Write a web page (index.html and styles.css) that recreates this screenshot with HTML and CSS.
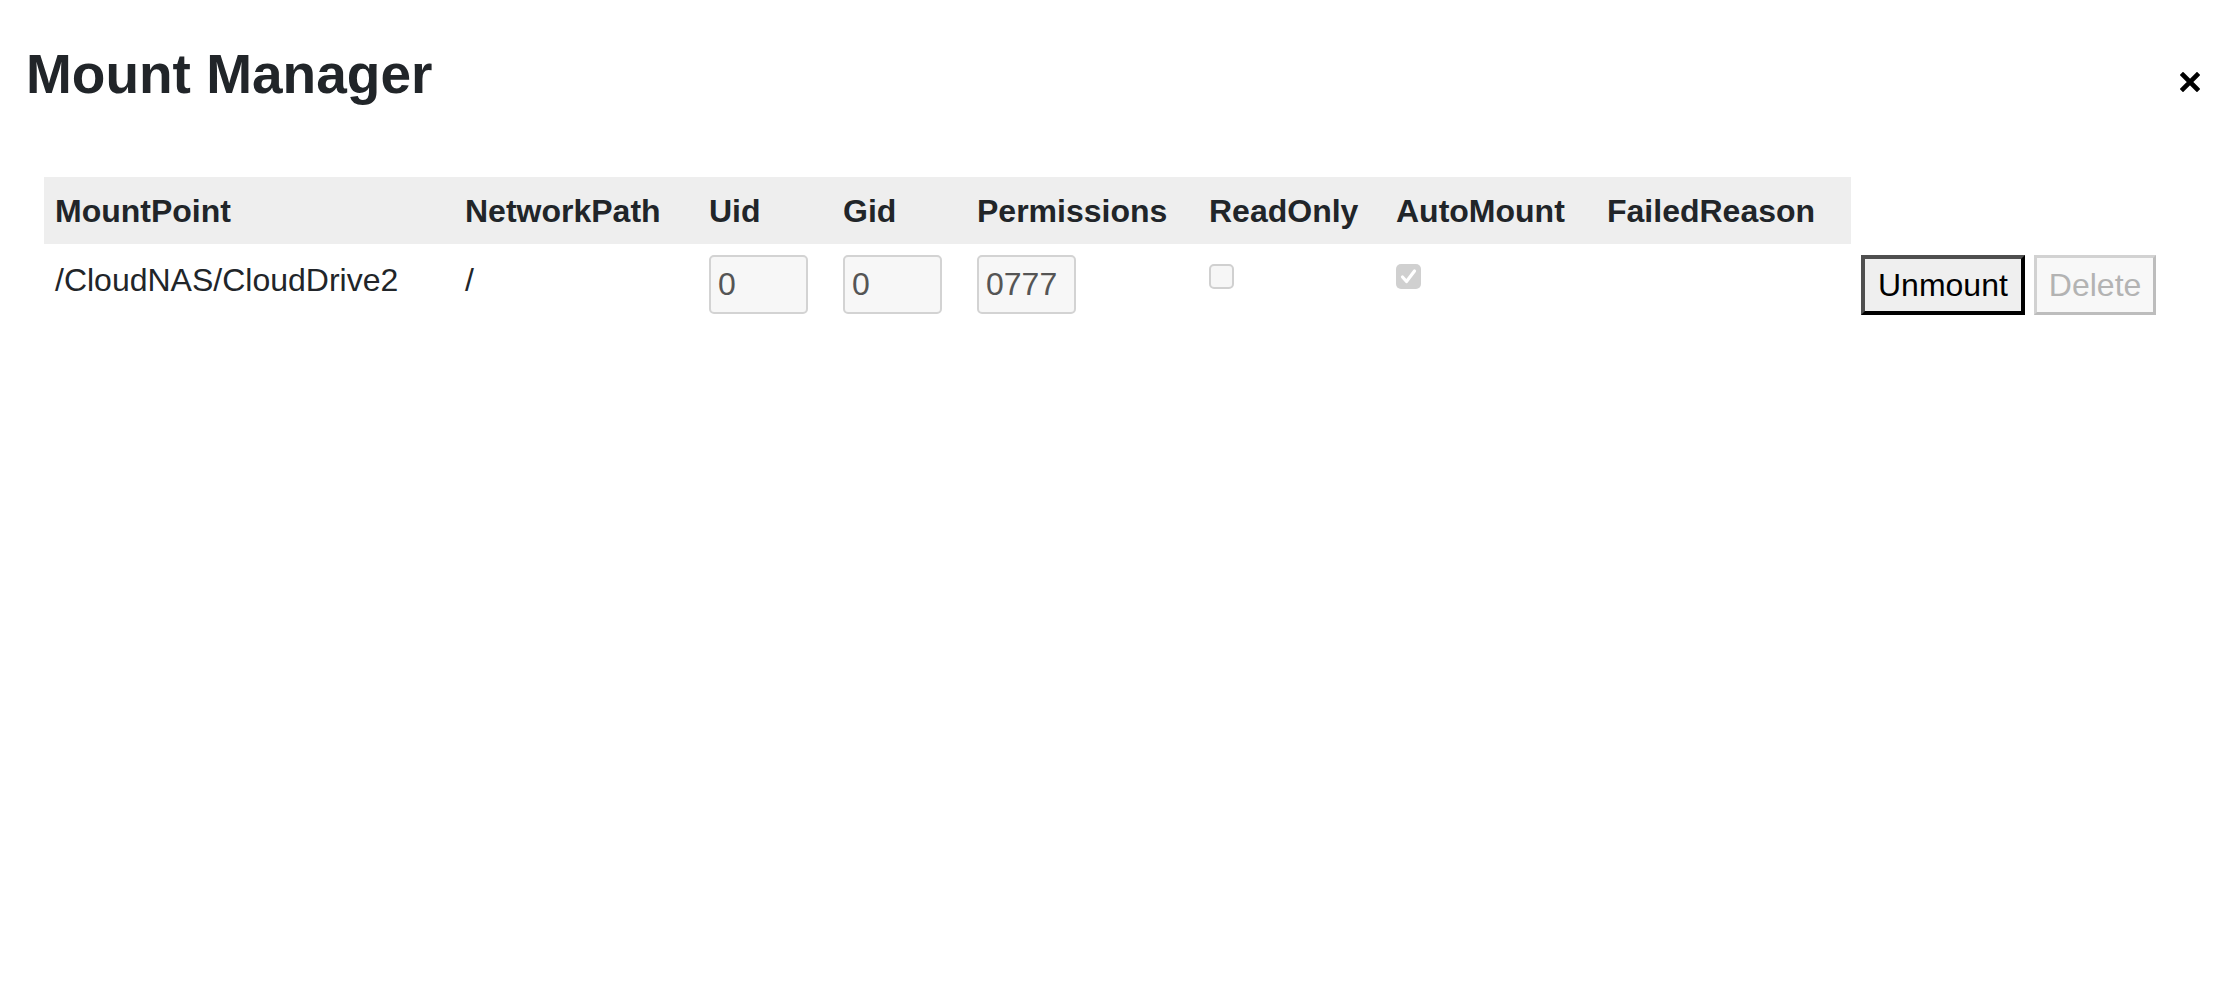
FILE: index.html
```html
<!DOCTYPE html>
<html lang="en">
<head>
<meta charset="utf-8">
<title>Mount Manager</title>
<link rel="stylesheet" href="styles.css">
</head>
<body>
<div class="modal">
  <div class="modal-header">
    <h1 class="modal-title">Mount Manager</h1>
    <button class="close" type="button" aria-label="Close">
      <svg width="20" height="20" viewBox="0 0 20 20"><path d="M3 3 L17 17 M17 3 L3 17" stroke="#000" stroke-width="4.6" stroke-linecap="square" fill="none"/></svg>
    </button>
  </div>
  <div class="modal-body">
    <table class="mounts">
      <colgroup>
        <col class="c-mp"><col class="c-np"><col class="c-uid"><col class="c-gid"><col class="c-perm"><col class="c-ro"><col class="c-auto"><col class="c-fail"><col class="c-act">
      </colgroup>
      <thead>
        <tr>
          <th>MountPoint</th>
          <th>NetworkPath</th>
          <th>Uid</th>
          <th>Gid</th>
          <th>Permissions</th>
          <th>ReadOnly</th>
          <th>AutoMount</th>
          <th>FailedReason</th>
          <th class="th-empty"></th>
        </tr>
      </thead>
      <tbody>
        <tr>
          <td class="txt">/CloudNAS/CloudDrive2</td>
          <td class="txt">/</td>
          <td><input class="field" type="text" value="0" readonly></td>
          <td><input class="field" type="text" value="0" readonly></td>
          <td><input class="field" type="text" value="0777" readonly></td>
          <td><span class="check"></span></td>
          <td><span class="check checked"><svg width="25" height="25" viewBox="0 0 25 25"><path d="M6.5 13 L10.5 17.5 L18.5 7" stroke="#fff" stroke-width="3.2" fill="none" stroke-linecap="round" stroke-linejoin="round"/></svg></span></td>
          <td class="txt"></td>
          <td class="actions"><button class="btn btn-unmount" type="button">Unmount</button><button class="btn btn-delete" type="button" disabled>Delete</button></td>
        </tr>
      </tbody>
    </table>
  </div>
</div>
</body>
</html>
```

FILE: styles.css
```css
* { box-sizing: border-box; }

body {
  margin: 0;
  background: #fff;
  font-family: "Liberation Sans", Arial, Helvetica, sans-serif;
  color: #212529;
}

.modal-header {
  display: flex;
  justify-content: space-between;
  align-items: flex-start;
  padding: 43px 36px 0 26px;
}

.modal-title {
  margin: 0;
  font-size: 55px;
  line-height: 62px;
  font-weight: bold;
  color: #212529;
}

.close {
  margin-top: 29px;
  padding: 0;
  border: 0;
  background: none;
  width: 20px;
  height: 20px;
  display: flex;
}

.modal-body {
  padding: 72px 0 0 44px;
}

.mounts {
  border-collapse: collapse;
  border-spacing: 0;
  table-layout: fixed;
  width: 2137px;
}

.c-mp { width: 410px; }
.c-np { width: 244px; }
.c-uid { width: 134px; }
.c-gid { width: 134px; }
.c-perm { width: 232px; }
.c-ro { width: 187px; }
.c-auto { width: 211px; }
.c-fail { width: 255px; }
.c-act { width: 330px; }

.mounts th {
  background: #eeeeee;
  text-align: left;
  font-size: 32px;
  font-weight: bold;
  line-height: 36px;
  padding: 16px 0 15px 11px;
  white-space: nowrap;
  color: #212529;
}

.mounts th.th-empty { background: transparent; }

.mounts td {
  vertical-align: top;
  padding: 11px 0 0 11px;
  font-size: 32px;
  white-space: nowrap;
  color: #212529;
}

.mounts td.txt {
  line-height: 37px;
  padding-top: 18px;
}

.field {
  width: 99px;
  height: 59px;
  border: 2px solid #d3d3d3;
  border-radius: 5px;
  background: #f7f7f7;
  font-family: "Liberation Sans", Arial, Helvetica, sans-serif;
  font-size: 32px;
  color: #555;
  padding: 0 7px;
  margin: 0;
  outline: none;
}

.check {
  display: block;
  width: 25px;
  height: 25px;
  margin-top: 9px;
  border: 2px solid #d0d0d0;
  border-radius: 5px;
  background: #f6f6f6;
}

.check.checked {
  border: 0;
  background: #d0d0d0;
}

.check svg { display: block; }

.mounts td.actions {
  padding-left: 10px;
  display: flex;
  gap: 9px;
}

.btn {
  height: 60px;
  font-family: "Liberation Sans", Arial, Helvetica, sans-serif;
  font-size: 32px;
  padding: 0 13px;
  margin: 0;
}

.btn-unmount {
  background: #efefef;
  color: #000;
  border: 4px solid;
  border-color: #4f4f4f #000 #000 #4f4f4f;
}

.btn-delete {
  background: #f8f8f8;
  color: #b3b3b3;
  border: 3px solid;
  border-color: #d2d2d2 #bdbdbd #bdbdbd #d2d2d2;
  padding: 0 12px;
}
```
